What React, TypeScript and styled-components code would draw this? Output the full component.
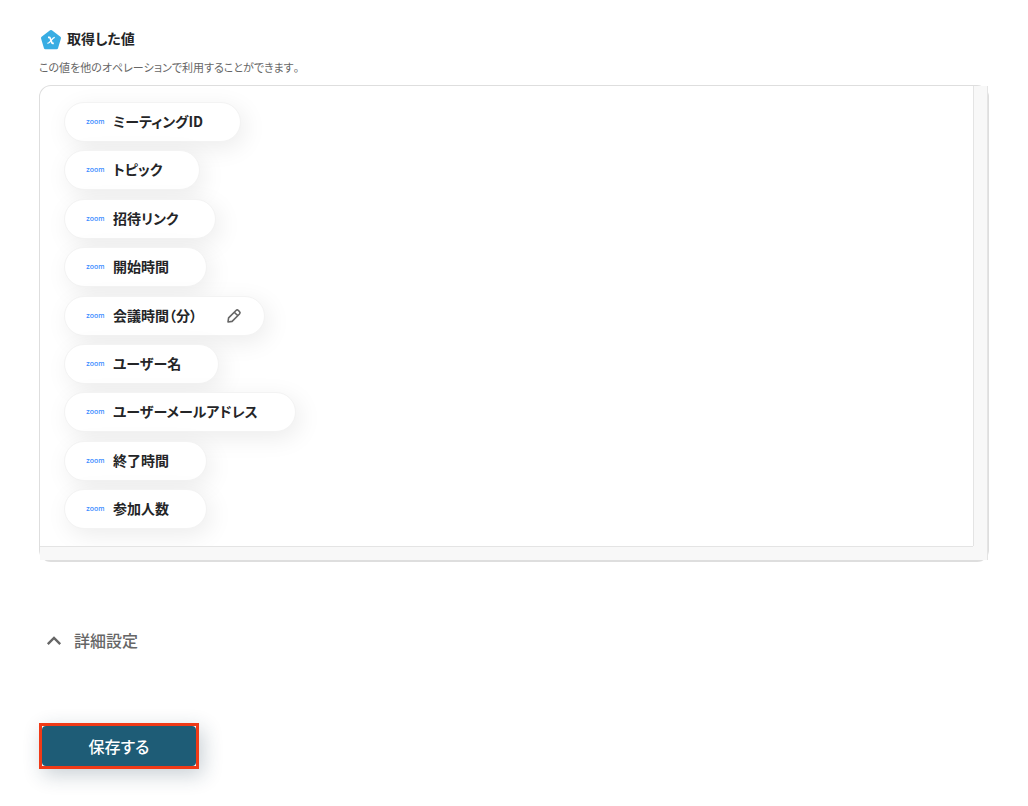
import React from "react";
import styled, { createGlobalStyle } from "styled-components";

const GlobalStyle = createGlobalStyle`
  *, *::before, *::after { box-sizing: border-box; }
  body {
    margin: 0;
    background: #ffffff;
    color: #242527;
    font-family: "Noto Sans CJK JP", sans-serif;
    font-feature-settings: "palt";
  }
`;

const Page = styled.main`
  padding: 28px 39px 36px;
`;

const Heading = styled.h2`
  display: flex;
  align-items: flex-start;
  gap: 5px;
  margin: 0;
  padding-left: 1px;
  font-size: 14px;
  line-height: 20px;
  font-weight: 700;
`;

const HeadingIcon = styled.svg`
  width: 22px;
  height: 22px;
  flex: none;
  margin-top: 1px;
`;

const Lead = styled.p`
  margin: 7px 0 8px;
  font-size: 11px;
  line-height: 19px;
  color: #666666;
  font-kerning: none;
`;

const Panel = styled.section`
  display: grid;
  grid-template: 1fr 14px / 1fr 15px;
  min-height: 477px;
  border: 1px solid #dedede;
  border-bottom-width: 2px;
  border-radius: 12px;
`;

const OutputList = styled.ul`
  display: flex;
  flex-direction: column;
  align-items: flex-start;
  justify-content: space-between;
  margin: 0;
  padding: 16px 24px 17px;
  list-style: none;
`;

const TrackRight = styled.div`
  background: #f8f8f8;
  border-left: 1px solid #e4e4e4;
  border-right: 1px solid #e4e4e4;
`;

const TrackBottom = styled.div`
  grid-column: 1 / -1;
  background: linear-gradient(#e4e4e4, #e4e4e4) 0 0 / calc(100% - 14px) 1px no-repeat #f8f8f8;
  border-right: 1px solid #e4e4e4;
`;

const Pill = styled.li`
  display: flex;
  align-items: center;
  height: 40px;
  padding: 0 37px 2px 21px;
  border: 1px solid #f3f3f3;
  border-radius: 20px;
  background: #ffffff;
  box-shadow: 4px 6px 24px rgba(0, 0, 0, 0.08);
  font-size: 14px;
  line-height: 20px;
  font-weight: 700;
  white-space: nowrap;

  &:has(button) { padding-right: 22px; }
`;

const ZoomMark = styled.span`
  width: 27px;
  padding-top: 2px;
  color: #3b8bff;
  font-family: Inter, sans-serif;
  font-size: 7px;
  line-height: 8px;
  font-weight: 500;
`;

const EditButton = styled.button`
  display: flex;
  margin: 2px 0 0 29px;
  padding: 0;
  border: 0;
  background: none;
  color: #666666;
  cursor: pointer;

  svg { width: 16px; height: 16px; }
`;

const AdvancedToggle = styled.button`
  display: flex;
  align-items: center;
  gap: 12px;
  margin: 66px 0 0 7px;
  padding: 0;
  border: 0;
  background: none;
  color: #666666;
  font: inherit;
  font-size: 16px;
  line-height: 24px;
  font-weight: 500;
  cursor: pointer;

  svg { width: 16px; height: 16px; }
`;

const SaveFrame = styled.div`
  width: 160px;
  margin-top: 71px;
  border: 3px solid #f03a17;
  background: #ffffff;
  box-shadow: 4px 6px 20px rgba(30, 60, 80, 0.24);
`;

const SaveButton = styled.button`
  display: block;
  width: 100%;
  height: 40px;
  padding: 0;
  border: 0;
  border-radius: 4px;
  background: #1e5c76;
  color: #ffffff;
  font: inherit;
  font-size: 16px;
  line-height: 24px;
  font-weight: 500;
  cursor: pointer;
`;

const outputs: { label: string; editable?: boolean }[] = [
  { label: "ミーティングID" },
  { label: "トピック" },
  { label: "招待リンク" },
  { label: "開始時間" },
  { label: "会議時間（分）", editable: true },
  { label: "ユーザー名" },
  { label: "ユーザーメールアドレス" },
  { label: "終了時間" },
  { label: "参加人数" },
];

function VariableIcon() {
  return (
    <HeadingIcon viewBox="0 0 22 22" aria-hidden="true">
      <path
        d="M11 2.5 19.5 9 16.6 18.7H5.4L2.5 9Z"
        fill="#38ade3"
        stroke="#38ade3"
        strokeWidth="3"
        strokeLinejoin="round"
      />
      <path d="M8 8.4h1.2c.5 0 .8.3 1 .8l1.7 4.5c.2.5.5.7 1 .7h.9" fill="none" stroke="#fff" strokeWidth="1.7" />
      <path d="M14.8 8.3c-1.2 0-2 .9-3.6 3s-2.3 3.1-3.8 3.1" fill="none" stroke="#fff" strokeWidth="1.3" />
    </HeadingIcon>
  );
}

function PencilIcon() {
  return (
    <svg viewBox="0 0 16 16" fill="none" stroke="currentColor" strokeWidth="1.6" strokeLinejoin="round" aria-hidden="true">
      <path d="M2 14 2.6 9.9 10 2.5Q11.2 1.3 12.4 2.5L13.5 3.6Q14.7 4.8 13.5 6L6.1 13.4ZM8.3 4.2 11.8 7.7" />
    </svg>
  );
}

export default function App() {
  return (
    <>
      <GlobalStyle />
      <Page lang="ja">
        <Heading>
          <VariableIcon />
          取得した値
        </Heading>
        <Lead>この値を他のオペレーションで利用することができます。</Lead>
        <Panel>
          <OutputList>
            {outputs.map(({ label, editable }) => (
              <Pill key={label}>
                <ZoomMark>zoom</ZoomMark>
                {label}
                {editable && (
                  <EditButton type="button" aria-label={`${label}を編集`}>
                    <PencilIcon />
                  </EditButton>
                )}
              </Pill>
            ))}
          </OutputList>
          <TrackRight />
          <TrackBottom />
        </Panel>
        <AdvancedToggle type="button" aria-expanded="false">
          <svg viewBox="0 0 16 16" fill="none" stroke="currentColor" strokeWidth="2.4" aria-hidden="true">
            <path d="M1.8 12.2 8 6l6.2 6.2" />
          </svg>
          詳細設定
        </AdvancedToggle>
        <SaveFrame>
          <SaveButton type="button">保存する</SaveButton>
        </SaveFrame>
      </Page>
    </>
  );
}
